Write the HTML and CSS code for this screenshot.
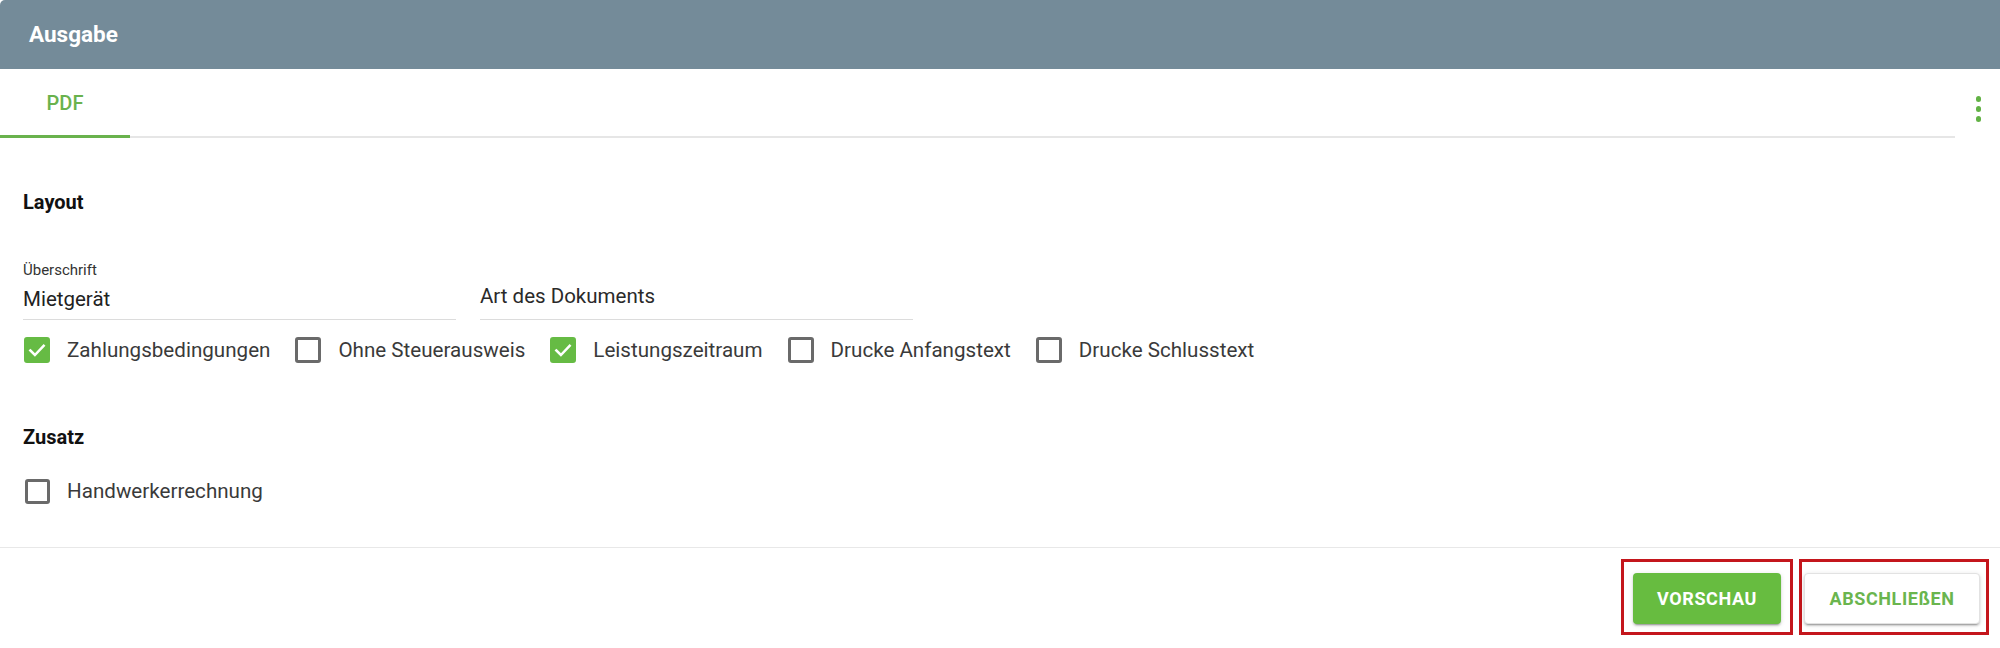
FILE: index.html
```html
<!DOCTYPE html>
<html lang="de">
<head>
<meta charset="utf-8">
<title>Ausgabe</title>
<link rel="stylesheet" href="styles.css">
</head>
<body>
<div class="dialog">
  <header class="header"><h1 class="title">Ausgabe</h1></header>
  <nav class="tabs">
    <div class="tablist">
      <div class="tab tab-active">PDF</div>
    </div>
    <div class="menu" aria-label="Menü">
      <span class="dot"></span><span class="dot"></span><span class="dot"></span>
    </div>
  </nav>
  <main class="content">
    <h2 class="section-title section-layout">Layout</h2>
    <div class="fields">
      <div class="field">
        <label class="field-label">Überschrift</label>
        <div class="field-input">Mietgerät</div>
      </div>
      <div class="field">
        <div class="field-input placeholder">Art des Dokuments</div>
      </div>
    </div>
    <div class="checks">
      <div class="check">
        <span class="box checked"><svg viewBox="0 0 24 24"><path d="M4 12.5 9.5 18 20 7"/></svg></span>
        <span class="check-label">Zahlungsbedingungen</span>
      </div>
      <div class="check">
        <span class="box"></span>
        <span class="check-label">Ohne Steuerausweis</span>
      </div>
      <div class="check">
        <span class="box checked"><svg viewBox="0 0 24 24"><path d="M4 12.5 9.5 18 20 7"/></svg></span>
        <span class="check-label">Leistungszeitraum</span>
      </div>
      <div class="check">
        <span class="box"></span>
        <span class="check-label">Drucke Anfangstext</span>
      </div>
      <div class="check">
        <span class="box"></span>
        <span class="check-label">Drucke Schlusstext</span>
      </div>
    </div>
    <h2 class="section-title section-zusatz">Zusatz</h2>
    <div class="checks checks-zusatz">
      <div class="check">
        <span class="box"></span>
        <span class="check-label">Handwerkerrechnung</span>
      </div>
    </div>
  </main>
  <footer class="footer">
    <div class="mark mark-preview"><button class="btn btn-primary">VORSCHAU</button></div>
    <div class="mark mark-finish"><button class="btn btn-secondary">ABSCHLIEßEN</button></div>
  </footer>
</div>
</body>
</html>
```
FILE: styles.css
```css
* { box-sizing: border-box; }
html, body { margin: 0; padding: 0; background: #fff; }
body { font-family: Roboto, "Noto Sans", "Liberation Sans", sans-serif; color: #222; }

.dialog {
  width: 2000px;
  height: 648px;
  display: flex;
  flex-direction: column;
  overflow: hidden;
  border-radius: 5px 0 0 0;
}

.header {
  height: 69px;
  flex: none;
  background: #748b99;
  display: flex;
  align-items: center;
  padding-left: 29px;
}
.title {
  margin: 0;
  font-size: 22.5px;
  font-weight: 700;
  color: #fff;
  line-height: 1;
}

.tabs {
  height: 69px;
  flex: none;
  display: flex;
}
.tablist {
  flex: 1;
  display: flex;
  border-bottom: 2px solid #e6e6e6;
}
.tab {
  width: 130px;
  display: flex;
  align-items: center;
  justify-content: center;
  font-size: 20px;
  font-weight: 500;
  color: #69b24d;
  margin-bottom: -2px;
  padding-top: 1px;
}
.tab-active { border-bottom: 3px solid #69b24d; }
.menu {
  width: 45px;
  display: flex;
  flex-direction: column;
  align-items: center;
  gap: 4.5px;
  padding-top: 27px;
  padding-left: 2px;
}
.dot {
  width: 5.5px;
  height: 5.5px;
  border-radius: 50%;
  background: #62b245;
}

.content {
  flex: 1;
  padding: 0 23px;
}
.section-title {
  margin: 0;
  font-size: 20px;
  line-height: 24px;
  font-weight: 700;
  color: #111;
}
.section-layout { margin-top: 52px; }
.section-zusatz { margin-top: 62px; }

.fields {
  display: flex;
  align-items: flex-end;
  gap: 24px;
  margin-top: 47px;
}
.field {
  width: 433px;
  display: flex;
  flex-direction: column;
  border-bottom: 1px solid #dcdcdc;
}
.field-label {
  font-size: 15px;
  line-height: 18px;
  color: #333;
  margin-bottom: 8px;
}
.field-input {
  font-size: 20.5px;
  line-height: 24px;
  color: #222;
  padding-bottom: 8px;
}
.field-input.placeholder {
  color: #2a2a2a;
  padding-bottom: 11px;
}

.checks {
  display: flex;
  gap: 25px;
  margin-top: 17px;
  padding-left: 1px;
}
.checks-zusatz { margin-top: 29px; padding-left: 2px; }
.check {
  display: flex;
  align-items: center;
  gap: 17px;
}
.box {
  width: 26px;
  height: 26px;
  border: 3px solid #6a6a6a;
  border-radius: 3px;
  display: flex;
  align-items: center;
  justify-content: center;
  flex: none;
}
.checks-zusatz .box { width: 25px; height: 25px; }
.box.checked {
  background: #66bb44;
  border-color: #66bb44;
}
.box svg {
  width: 24px;
  height: 24px;
  fill: none;
  stroke: #fff;
  stroke-width: 3;
  stroke-linecap: square;
}
.check-label {
  font-size: 20.6px;
  line-height: 26px;
  color: #3a3a3a;
}

.footer {
  height: 101px;
  flex: none;
  border-top: 1px solid #e8e8e8;
  display: flex;
  justify-content: flex-end;
  align-items: flex-start;
  gap: 6px;
  padding: 11px 11px 0 0;
}
.mark {
  height: 76px;
  border: 3px solid #c4161c;
  padding-top: 11px;
}
.mark-preview { width: 172px; padding-left: 9px; }
.mark-finish { width: 190px; padding-left: 2px; }
.btn {
  height: 51px;
  border-radius: 4px;
  font-family: Roboto, "Liberation Sans", sans-serif;
  font-size: 18px;
  font-weight: 700;
  letter-spacing: 0.6px;
  cursor: pointer;
  box-shadow: 0 3px 1px -2px rgba(0,0,0,.2), 0 2px 2px 0 rgba(0,0,0,.14), 0 1px 5px 0 rgba(0,0,0,.12);
}
.btn-primary {
  width: 148px;
  background: #67bc40;
  color: #fff;
  border: none;
}
.btn-secondary {
  width: 176px;
  background: #fff;
  color: #6ab54e;
  border: 1px solid #e2e2e2;
}
```
